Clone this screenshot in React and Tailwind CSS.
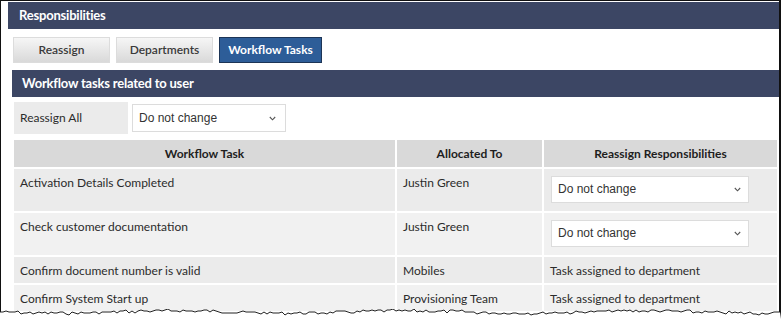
import React from "react";

function Chevron() {
  return (
    <svg width="7" height="5" viewBox="0 0 7 5" className="shrink-0">
      <path d="M0.8 1 L3.5 3.8 L6.2 1" fill="none" stroke="#555" strokeWidth="1.1" />
    </svg>
  );
}

function Select({ className }) {
  return (
    <div
      className={
        "flex items-center justify-between bg-white border border-[#dcdcdc] pl-[6px] text-[12px] text-[#333] " +
        className
      }
      style={{ fontFamily: '"Liberation Sans", Arial, sans-serif' }}
    >
      <span>Do not change</span>
      <Chevron />
    </div>
  );
}

function TornEdge() {
  const pts = [];
  let seed = 7;
  const rnd = () => {
    seed = (seed * 9301 + 49297) % 233280;
    return seed / 233280;
  };
  for (let x = 0; x <= 781; x += 3) {
    const y = 3 + Math.round(rnd() * 3 - 1.5 + Math.sin(x / 37) * 1.2);
    pts.push(`${x},${y}`);
  }
  const line = pts.join(" ");
  return (
    <svg
      width="781"
      height="10"
      viewBox="0 0 781 10"
      className="absolute left-0 top-[309px]"
    >
      <polygon points={`0,10 ${line} 781,10`} fill="#fff" />
      <polyline points={line} fill="none" stroke="#222" strokeWidth="1" />
    </svg>
  );
}

const rows = [
  { task: "Activation Details Completed", to: "Justin Green", select: true, bg: "bg-[#ebebeb]" },
  { task: "Check customer documentation", to: "Justin Green", select: true, bg: "bg-[#f1f1f1]" },
  { task: "Confirm document number is valid", to: "Mobiles", select: false, bg: "bg-[#ebebeb]" },
  { task: "Confirm System Start up", to: "Provisioning Team", select: false, bg: "bg-[#f1f1f1]" },
];

export default function App() {
  return (
    <div
      className="relative w-[781px] h-[319px] overflow-hidden bg-white text-[#2b2b2b]"
      style={{ fontFamily: 'Lato, "Open Sans", sans-serif' }}
    >
      <div className="h-[319px] border-l border-t border-r-2 border-[#111] pt-[1px] pl-[7px]">
        <div className="h-[27px] bg-[#3c4664] pl-[11px] flex items-center text-white font-bold text-[13px] tracking-[-0.2px]">
          Responsibilities
        </div>
        <div className="pl-[4px]">
          <div className="flex mt-[8px] ml-[1px] gap-[6px] text-[12px]">
            <div className="w-[97px] h-[26px] flex items-center justify-center border border-[#dcdcdc] bg-gradient-to-b from-[#f6f6f6] to-[#d9d9d9] text-[#3a3a3a] font-semibold">
              Reassign
            </div>
            <div className="w-[97px] h-[26px] flex items-center justify-center border border-[#dcdcdc] bg-gradient-to-b from-[#f6f6f6] to-[#d9d9d9] text-[#3a3a3a] font-semibold">
              Departments
            </div>
            <div className="w-[103px] h-[26px] flex items-center justify-center border border-[#1d3556] bg-[#2d5d98] text-white font-bold">
              Workflow Tasks
            </div>
          </div>
          <div className="mt-[7px] h-[27px] bg-[#3c4664] pl-[10px] flex items-center text-white font-bold text-[13px] tracking-[-0.2px]">
            Workflow tasks related to user
          </div>
          <div className="mt-[5px] ml-[2px] flex items-center gap-[4px] text-[12px]">
            <div className="w-[114px] h-[32px] bg-[#ebebeb] flex items-center pl-[6px]">
              Reassign All
            </div>
            <Select className="w-[154px] h-[28px] pr-[9px]" />
          </div>
          <div className="mt-[6px] ml-[2px] w-[763px] grid grid-cols-[381px_145px_233px] gap-[2px] text-[12px] leading-[15px]">
            <div className="h-[27px] bg-[#d9d9d9] flex items-center justify-center font-bold text-[#1e1e1e]">
              Workflow Task
            </div>
            <div className="h-[27px] bg-[#d9d9d9] flex items-center justify-center font-bold text-[#1e1e1e]">
              Allocated To
            </div>
            <div className="h-[27px] bg-[#d9d9d9] flex items-center justify-center font-bold text-[#1e1e1e]">
              Reassign Responsibilities
            </div>
            {rows.map((r, i) => (
              <React.Fragment key={i}>
                <div className={r.bg + " px-[6px] pt-[6px] pb-[5px]"}>{r.task}</div>
                <div className={r.bg + " px-[6px] pt-[6px] pb-[5px]"}>{r.to}</div>
                {r.select ? (
                  <div className={r.bg + " pl-[7px] pt-[7px] pb-[8px]"}>
                    <Select className="w-[198px] h-[27px] pr-[7px]" />
                  </div>
                ) : (
                  <div className={r.bg + " px-[6px] pt-[6px] pb-[5px]"}>Task assigned to department</div>
                )}
              </React.Fragment>
            ))}
          </div>
        </div>
      </div>
      <TornEdge />
    </div>
  );
}
